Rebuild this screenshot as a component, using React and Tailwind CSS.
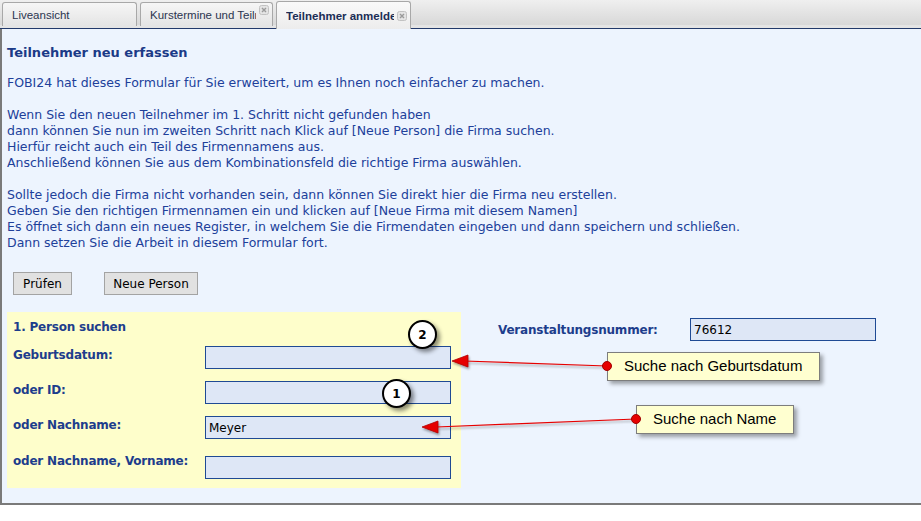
import React from 'react'

const font = { fontFamily: '"DejaVu Sans", Verdana, sans-serif' }
const tabFont = { fontFamily: '"Liberation Sans", Arial, sans-serif' }

function CloseIcon() {
  return (
    <svg width="10" height="10" viewBox="0 0 10 10" className="shrink-0 self-start mt-[2px]">
      <rect x="0.5" y="0.5" width="9" height="9" rx="2" fill="#e4e4e4" stroke="#c2c2c2" />
      <path d="M3 3 L7 7 M7 3 L3 7" stroke="#9a9a9a" strokeWidth="1.4" />
    </svg>
  )
}

function Tab({ label, active, closable, width }) {
  return (
    <div
      className={
        'flex items-center gap-[3px] border border-b-0 border-[#a8a8a8] rounded-t-[3px] pl-[9px] pr-[3px] overflow-hidden ' +
        (active
          ? 'h-[28px] mt-[1px] bg-gradient-to-b from-[#fafafa] to-[#ececec] font-bold text-[#1b2d55] items-start pt-[7px]'
          : 'h-[24px] mt-[2px] bg-gradient-to-b from-[#f6f6f6] to-[#e4e4e4] text-[#2b3550]')
      }
      style={{ width }}
    >
      <span className="flex-1 min-w-0 whitespace-nowrap overflow-hidden text-[11.5px] leading-[14px]" style={tabFont}>{label}</span>
      {closable && <CloseIcon />}
    </div>
  )
}

function Field({ value, width = 246 }) {
  return (
    <div
      className="h-[23px] bg-[#dee7f6] border border-[#1f4a94] px-[3px] flex items-center text-[12px] text-black"
      style={{ width }}
    >
      {value}
    </div>
  )
}

function Badge({ n, x, y }) {
  return (
    <div
      className="absolute w-[29px] h-[29px] rounded-full bg-white border-2 border-black flex items-center justify-center text-[12px] font-bold text-black shadow-[3px_3px_4px_rgba(0,0,0,0.45)]"
      style={{ left: x - 14, top: y - 14 }}
    >
      {n}
    </div>
  )
}

export default function App() {
  const text = 'text-[12.5px] leading-[16px] text-[#20409a]'
  const label = 'text-[12px] leading-[16px] font-bold text-[#1d3d8c] tracking-[-0.2px]'
  return (
    <div className="w-[921px] h-[521px] bg-white relative overflow-hidden" style={font}>
      {/* tab bar */}
      <div className="h-[28px] bg-gradient-to-b from-[#efefef] to-[#d8d8d8] flex gap-[3px] pl-[2px] border-b-[3px] border-[#e4e4e4]">
        <Tab label="Liveansicht" width={135} />
        <Tab label="Kurstermine und Teilnehmer" closable width={133} />
        <Tab label="Teilnehmer anmelden" closable active width={135} />
      </div>
      <div className="h-[1px] bg-[#22396a]" />

      {/* content */}
      <div className="h-[476px] bg-[#edf4fe] border-l-2 border-b-2 border-[#7a7a7a] pl-[5px] pt-[16px]">
        <div className="text-[13px] leading-[16px] font-bold text-[#1b3a87]">Teilnehmer neu erfassen</div>
        <p className={text + ' mt-[14px]'}>FOBI24 hat dieses Formular für Sie erweitert, um es Ihnen noch einfacher zu machen.</p>
        <p className={text + ' mt-[16px]'}>
          Wenn Sie den neuen Teilnehmer im 1. Schritt nicht gefunden haben<br />
          dann können Sie nun im zweiten Schritt nach Klick auf [Neue Person] die Firma suchen.<br />
          Hierfür reicht auch ein Teil des Firmennamens aus.<br />
          Anschließend können Sie aus dem Kombinationsfeld die richtige Firma auswählen.
        </p>
        <p className={text + ' mt-[16px]'}>
          Sollte jedoch die Firma nicht vorhanden sein, dann können Sie direkt hier die Firma neu erstellen.<br />
          Geben Sie den richtigen Firmennamen ein und klicken auf [Neue Firma mit diesem Namen]<br />
          Es öffnet sich dann ein neues Register, in welchem Sie die Firmendaten eingeben und dann speichern und schließen.<br />
          Dann setzen Sie die Arbeit in diesem Formular fort.
        </p>

        <div className="flex gap-[32px] mt-[21px] pl-[6px]">
          <button className="h-[23px] w-[59px] bg-[#e1e1e1] border border-[#a3a3a3] text-[12px] text-black">Prüfen</button>
          <button className="h-[23px] w-[94px] bg-[#e1e1e1] border border-[#a3a3a3] text-[12px] text-black">Neue Person</button>
        </div>

        <div className="flex mt-[17px]">
          <div className="w-[454px] h-[176px] bg-[#fefecb] pl-[6px] pt-[7px]">
            <div className={label}>1. Person suchen</div>
            <div className="flex mt-[11px]">
              <div className={label + ' w-[192px] pt-[1px]'}>Geburtsdatum:</div>
              <Field />
            </div>
            <div className="flex mt-[12px]">
              <div className={label + ' w-[192px] pt-[1px]'}>oder ID:</div>
              <Field />
            </div>
            <div className="flex mt-[12px]">
              <div className={label + ' w-[192px] pt-[1px]'}>oder Nachname:</div>
              <Field value="Meyer" />
            </div>
            <div className="flex mt-[13px]">
              <div className={label + ' w-[192px] pt-[1px]'}>oder Nachname, Vorname:</div>
              <div className="mt-[4px]"><Field /></div>
            </div>
          </div>
          <div className="flex items-center h-[23px] mt-[6px] ml-[37px]">
            <div className={label + ' w-[192px]'}>Veranstaltungsnummer:</div>
            <Field value="76612" width={186} />
          </div>
        </div>
      </div>

      {/* annotations */}
      <svg className="absolute left-0 top-0 pointer-events-none" width="921" height="521">
        <defs>
          <filter id="sh" x="-20%" y="-50%" width="140%" height="200%">
            <feDropShadow dx="1" dy="2" stdDeviation="1" floodColor="#000" floodOpacity="0.35" />
          </filter>
        </defs>
        <g filter="url(#sh)">
          <line x1="607" y1="366" x2="464" y2="361" stroke="#e60000" strokeWidth="1.2" />
          <polygon points="452,361 468,355 468,367" fill="#e60000" stroke="#b00000" strokeWidth="0.8" />
          <line x1="636" y1="419" x2="436" y2="427" stroke="#e60000" strokeWidth="1.2" />
          <polygon points="422,427 438,421 438,433" fill="#e60000" stroke="#b00000" strokeWidth="0.8" />
        </g>
      </svg>
      <div className="absolute left-[607px] top-[352px] w-[213px] h-[29px] bg-[#ffffd0] border border-[#7d7d7d] shadow-[3px_3px_4px_rgba(0,0,0,0.35)] flex items-center pl-[16px] text-[15px] text-black" style={tabFont}>
        Suche nach Geburtsdatum
      </div>
      <div className="absolute left-[636px] top-[405px] w-[158px] h-[29px] bg-[#ffffd0] border border-[#7d7d7d] shadow-[3px_3px_4px_rgba(0,0,0,0.35)] flex items-center pl-[16px] text-[15px] text-black" style={tabFont}>
        Suche nach Name
      </div>
      <div className="absolute left-[602px] top-[361px] w-[10px] h-[10px] rounded-full bg-[#e60000] border border-[#a00000]" />
      <div className="absolute left-[631px] top-[414px] w-[10px] h-[10px] rounded-full bg-[#e60000] border border-[#a00000]" />
      <Badge n="2" x={422} y={334} />
      <Badge n="1" x={396} y={393} />
    </div>
  )
}
